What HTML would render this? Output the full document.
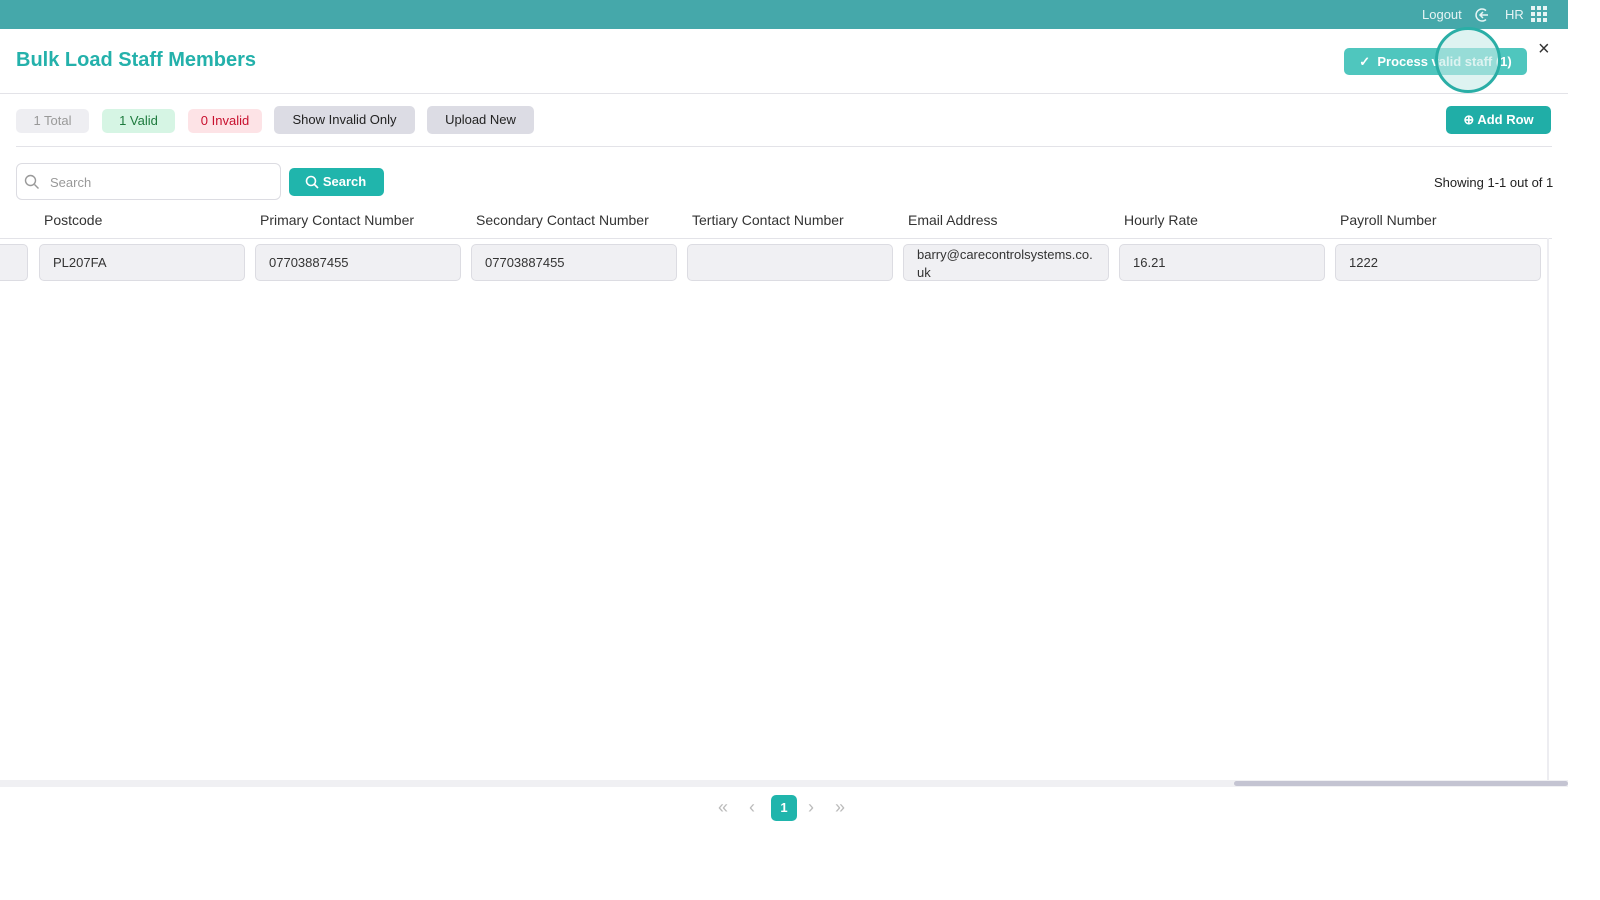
<!DOCTYPE html>
<html><head><style>
*{box-sizing:border-box;margin:0;padding:0}
body{width:1600px;height:900px;background:#fff;font-family:"Liberation Sans",sans-serif;position:relative;overflow:hidden;color:#222}
.abs{position:absolute}
.top{left:0;top:0;width:1568px;height:29px;background:#45a8aa}
.pill{position:absolute;top:109px;height:24px;border-radius:5px;font-size:13px;line-height:24px;text-align:center}
.btn{position:absolute;border-radius:5px;font-size:13px;text-align:center}
.hd{position:absolute;top:212px;font-size:14px;color:#333}
.cell{position:absolute;top:244px;height:37px;width:206px;background:#f0f0f3;border:1px solid #dcdce2;border-radius:5px;font-size:13px;color:#333;padding-left:13px;line-height:36px}
</style></head><body>
<div class="abs top"></div>
<div class="abs" style="left:1422px;top:7px;color:#e6f4f4;font-size:13px">Logout</div>
<svg class="abs" style="left:1474px;top:7px" width="16" height="16" viewBox="0 0 16 16" fill="none" stroke="#e6f4f4" stroke-width="1.5"><path d="M12 3.5A6 6 0 1 0 12 12.5"/><path d="M14 8H6M9 5L6 8l3 3"/></svg>
<div class="abs" style="left:1505px;top:7px;color:#e6f4f4;font-size:13px">HR</div>
<svg class="abs" style="left:1531px;top:6px" width="17" height="17"><g fill="#e6f4f4"><rect x="0" y="0" width="4" height="4"/><rect x="6" y="0" width="4" height="4"/><rect x="12" y="0" width="4" height="4"/><rect x="0" y="6" width="4" height="4"/><rect x="6" y="6" width="4" height="4"/><rect x="12" y="6" width="4" height="4"/><rect x="0" y="12" width="4" height="4"/><rect x="6" y="12" width="4" height="4"/><rect x="12" y="12" width="4" height="4"/></g></svg>

<div class="abs" style="left:16px;top:49px;font-size:20px;font-weight:bold;color:#24b1ab">Bulk Load Staff Members</div>
<div class="btn" style="left:1344px;top:48px;width:183px;height:27px;background:#4fc6be;color:#fff;line-height:27px;font-weight:bold">✓&nbsp; Process valid staff (1)</div>
<div class="abs" style="left:1435px;top:27px;width:66px;height:66px;border-radius:50%;border:3px solid #2aaea6;background:rgba(200,235,232,.6)"></div>
<div class="abs" style="left:1538px;top:38px;font-size:20px;color:#333">×</div>
<div class="abs" style="left:0;top:93px;width:1568px;height:1px;background:#e3e3e8"></div>

<div class="pill" style="left:16px;width:73px;background:#eeeef2;color:#999">1 Total</div>
<div class="pill" style="left:102px;width:73px;background:#d6f5e4;color:#1d7a3d">1 Valid</div>
<div class="pill" style="left:188px;width:74px;background:#fde3e6;color:#c8102e">0 Invalid</div>
<div class="btn" style="left:274px;top:106px;width:141px;height:28px;line-height:28px;background:#dcdce4">Show Invalid Only</div>
<div class="btn" style="left:427px;top:106px;width:107px;height:28px;line-height:28px;background:#dcdce4">Upload New</div>
<div class="btn" style="left:1446px;top:106px;width:105px;height:28px;line-height:28px;background:#20aea7;color:#fff;font-weight:bold">⊕ Add Row</div>
<div class="abs" style="left:16px;top:146px;width:1536px;height:1px;background:#e3e3e8"></div>

<div class="abs" style="left:16px;top:163px;width:265px;height:37px;border:1px solid #dcdce2;border-radius:6px;font-size:13px;color:#999;padding:11px 0 0 33px">Search</div>
<svg class="abs" style="left:24px;top:174px" width="16" height="16" fill="none" stroke="#999" stroke-width="1.4"><circle cx="6.5" cy="6.5" r="5"/><path d="M10.5 10.5l4 4"/></svg>
<div class="btn" style="left:289px;top:168px;width:95px;height:28px;line-height:28px;background:#20b5ac;color:#fff;font-weight:bold;padding-left:16px">Search</div>
<svg class="abs" style="left:305px;top:175px" width="14" height="14" fill="none" stroke="#fff" stroke-width="1.6"><circle cx="6" cy="6" r="4.5"/><path d="M9.5 9.5l3.5 3.5"/></svg>
<div class="abs" style="left:1434px;top:175px;font-size:13px;color:#222">Showing 1-1 out of 1</div>

<div class="hd" style="left:44px">Postcode</div>
<div class="hd" style="left:260px">Primary Contact Number</div>
<div class="hd" style="left:476px">Secondary Contact Number</div>
<div class="hd" style="left:692px">Tertiary Contact Number</div>
<div class="hd" style="left:908px">Email Address</div>
<div class="hd" style="left:1124px">Hourly Rate</div>
<div class="hd" style="left:1340px">Payroll Number</div>
<div class="abs" style="left:0;top:238px;width:1552px;height:1px;background:#e3e3e8"></div>

<div class="cell" style="left:-178px"></div>
<div class="cell" style="left:39px">PL207FA</div>
<div class="cell" style="left:255px">07703887455</div>
<div class="cell" style="left:471px">07703887455</div>
<div class="cell" style="left:687px"></div>
<div class="cell" style="left:903px;line-height:18px;padding-top:1px">barry@carecontrolsystems.co.<br>uk</div>
<div class="cell" style="left:1119px">16.21</div>
<div class="cell" style="left:1335px">1222</div>

<div class="abs" style="left:1547px;top:238px;width:2px;height:542px;background:#ededf1"></div>
<div class="abs" style="left:0;top:780px;width:1568px;height:7px;background:#f0f0f3"></div>
<div class="abs" style="left:1234px;top:781px;width:334px;height:5px;background:#c4c4d2;border-radius:3px"></div>

<div class="abs" style="left:718px;top:797px;font-size:18px;color:#bbb">«</div>
<div class="abs" style="left:749px;top:797px;font-size:18px;color:#bbb">‹</div>
<div class="abs" style="left:771px;top:795px;width:26px;height:26px;border-radius:5px;background:#20b5ac;color:#fff;font-size:13px;font-weight:bold;text-align:center;line-height:26px">1</div>
<div class="abs" style="left:808px;top:797px;font-size:18px;color:#bbb">›</div>
<div class="abs" style="left:835px;top:797px;font-size:18px;color:#bbb">»</div>
</body></html>
